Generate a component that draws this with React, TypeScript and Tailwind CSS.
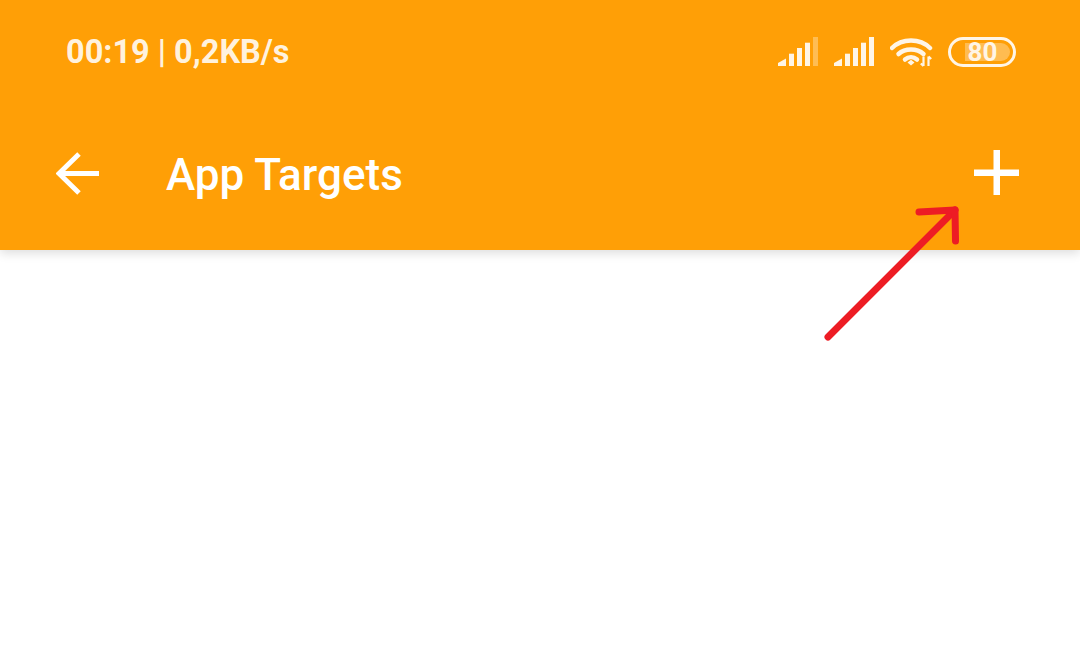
function Signal({ dim }: { dim?: boolean }) {
  return (
    <svg width="40" height="30" viewBox="0 0 40 30" fill="#fff5e6">
      <path d="M0 29V26L8 21.500V29Z" />
      <rect x="11" y="16.700" width="5" height="12.300" />
      <rect x="19" y="11" width="5" height="18" />
      <rect x="27" y="5.700" width="5" height="23.300" />
      <rect x="35" y="0" width="5" height="29" opacity={dim ? 0.35 : 1} />
    </svg>
  );
}

function Wifi() {
  return (
    <svg width="44" height="30" viewBox="0 0 44 30" fill="none" stroke="#fff5e6" strokeWidth="4.500">
      <path d="M2 11C12 1 30 1 40 11" strokeLinecap="round" />
      <path d="M8.500 17C15 11 27 11 33.500 17" strokeLinecap="round" />
      <path d="M15 22.500C18.500 19.500 23.500 19.500 27 22.500" strokeLinecap="round" />
      <path d="M17.500 25.500L21 22.800L24.500 25.500L21 28.500Z" fill="#fff5e6" stroke="none" />
      <path d="M33.500 19.500V29M30.800 26.500L33.500 29" strokeWidth="2.200" />
      <path d="M38.500 29V19.500M41.200 22L38.500 19.500" strokeWidth="2.200" />
    </svg>
  );
}

function Battery() {
  return (
    <div className="relative flex h-[30px] w-[68px] items-center justify-center rounded-full border-[3px] border-[#fff5e6]">
      <div className="absolute right-[3px] top-[3px] h-[18px] w-[45px] rounded-r-full bg-white/30" />
      <span className="relative ml-[1px] text-[26px] font-bold leading-none text-[#fff5e6]">80</span>
    </div>
  );
}

export default function App() {
  return (
    <div className="min-h-screen overflow-hidden bg-white font-['Roboto',sans-serif]">
      <header className="h-[250px] bg-[#ff9f06] shadow-[0_3px_10px_rgba(0,0,0,0.14)]">
        {/* Status bar */}
        <div className="flex items-center justify-between pl-[66px] pr-[64px] pt-[36px]">
          <span className="text-[32.500px] font-bold leading-[32px] text-[#fff2de]">00:19 | 0,2KB/s</span>
          <div className="flex items-center">
            <Signal dim />
            <div className="ml-4">
              <Signal />
            </div>
            <div className="ml-4">
              <Wifi />
            </div>
            <div className="ml-[14px]">
              <Battery />
            </div>
          </div>
        </div>

        {/* Toolbar */}
        <div className="mt-[80px] flex items-center pl-[56px] pr-[61px]">
          <svg className="mb-[1px]" width="44" height="44" viewBox="0 0 44 44" fill="none" stroke="#fff" strokeWidth="5">
            <path d="M43 21.500H4" />
            <path d="M23 2L3 21.500L23 41" />
          </svg>
          <h1 className="ml-[66px] mt-[2px] text-[44px] font-medium leading-[50px] text-white">App Targets</h1>
          <svg className="mb-[3px] ml-auto" width="45" height="45" viewBox="0 0 45 45" fill="#fff">
            <rect x="19.500" y="0" width="6.500" height="45" />
            <rect x="0" y="19.500" width="45" height="6.500" />
          </svg>
        </div>
      </header>

      {/* Annotation arrow */}
      <svg
        className="absolute left-[820px] top-[200px]"
        width="145"
        height="145"
        viewBox="820 200 145 145"
        fill="none"
        stroke="#ed1c24"
        strokeWidth="7"
        strokeLinecap="round"
        strokeLinejoin="round"
      >
        <path d="M828 337L955 210" />
        <path d="M919 212L955 210L955.500 241" />
      </svg>
    </div>
  );
}
